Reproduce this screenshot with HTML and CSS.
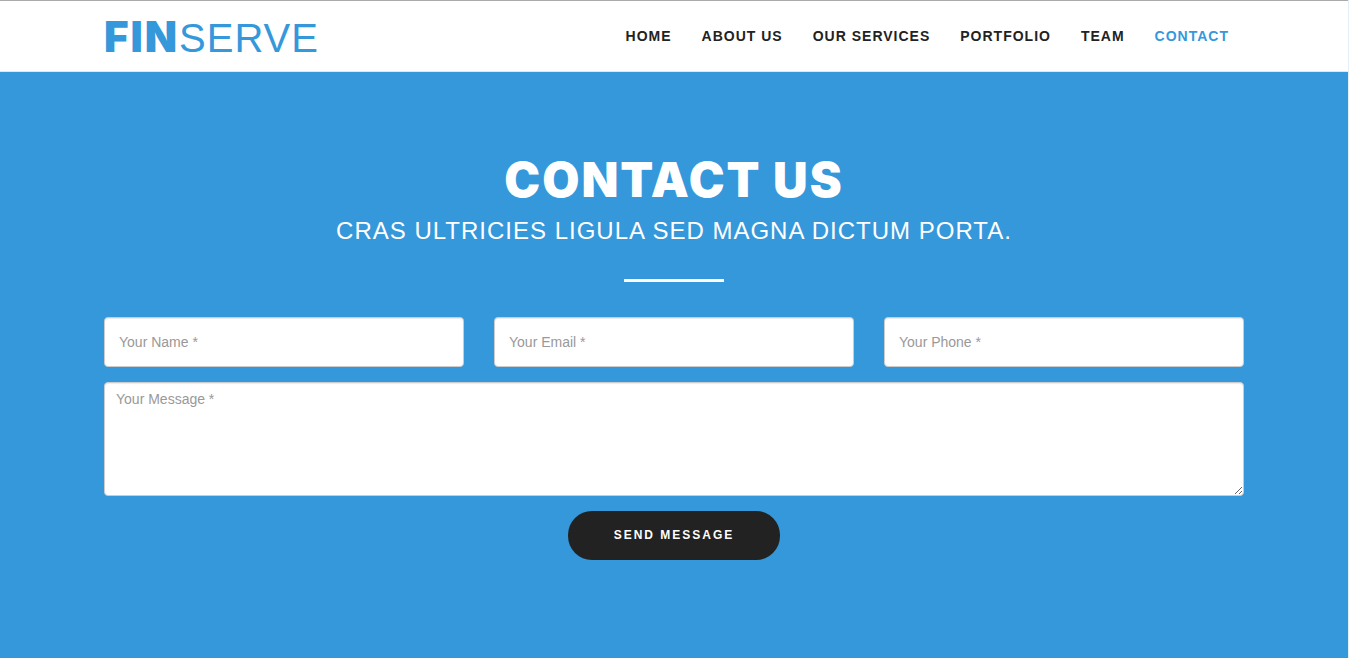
FILE: index.html
```html
<!DOCTYPE html>
<html lang="en">
<head>
<meta charset="utf-8">
<meta name="viewport" content="width=device-width, initial-scale=1">
<title>Finserve - Contact</title>
<link rel="stylesheet" href="styles.css">
</head>
<body class="page">
<header class="header">
  <div class="container header-row">
    <a class="logo" href="#"><span class="logo-strong">FIN</span>SERVE</a>
    <nav class="nav">
      <a class="nav-link" href="#home">HOME</a>
      <a class="nav-link" href="#about">ABOUT US</a>
      <a class="nav-link" href="#services">OUR SERVICES</a>
      <a class="nav-link" href="#portfolio">PORTFOLIO</a>
      <a class="nav-link" href="#team">TEAM</a>
      <a class="nav-link nav-link-active" href="#contact" aria-current="page">CONTACT</a>
    </nav>
  </div>
</header>
<main class="contact" id="contact">
  <div class="container">
    <h1 class="title">CONTACT US</h1>
    <p class="subtitle">CRAS ULTRICIES LIGULA SED MAGNA DICTUM PORTA.</p>
    <hr class="divider">
    <form class="form">
      <div class="fields">
        <input class="field" type="text" aria-label="Your Name" placeholder="Your Name *">
        <input class="field" type="email" aria-label="Your Email" placeholder="Your Email *">
        <input class="field" type="tel" aria-label="Your Phone" placeholder="Your Phone *">
      </div>
      <textarea class="field message" aria-label="Your Message" placeholder="Your Message *"></textarea>
      <button class="send" type="submit">SEND MESSAGE</button>
    </form>
  </div>
</main>
</body>
</html>
```
FILE: styles.css
```css
* {
  box-sizing: border-box;
}

.page {
  margin: 0;
  min-height: 100vh;
  display: flex;
  flex-direction: column;
  border-right: 1px solid #e4eef6;
  font-family: "Liberation Sans", Arial, sans-serif;
  font-size: 14px;
  color: #222;
  background: #fff;
}

.container {
  width: 100%;
  max-width: 1170px;
  margin: 0 auto;
  padding: 0 15px;
}

.header {
  border-top: 1px solid #aaa;
  border-bottom: 1px solid #e0e8ee;
  background: #fff;
}

.header-row {
  display: flex;
  align-items: center;
  justify-content: space-between;
  min-height: 70px;
}

.logo {
  display: flex;
  align-items: baseline;
  font-size: 40px;
  line-height: 48px;
  letter-spacing: 1px;
  color: #3598db;
  text-decoration: none;
  padding-top: 2px;
}

.logo-strong {
  font-family: Inter, "Arial Black", sans-serif;
  font-size: 42px;
  font-weight: 900;
  letter-spacing: 2px;
}

.nav {
  display: flex;
}

.nav-link {
  padding: 0 15px;
  line-height: 20px;
  font-weight: 700;
  letter-spacing: 1px;
  color: #222;
  text-decoration: none;
}

.nav-link-active {
  color: #3598db;
}

.contact {
  flex: 1;
  padding: 80px 0;
  background: #3598db;
  color: #fff;
  text-align: center;
}

.title {
  margin: 0;
  font-family: Inter, "Arial Black", sans-serif;
  font-size: 48px;
  font-weight: 900;
  line-height: 56px;
  letter-spacing: 2px;
}

.subtitle {
  margin: 8px 0 0;
  font-size: 24px;
  line-height: 30px;
  letter-spacing: 1px;
}

.divider {
  width: 100px;
  height: 3px;
  margin: 33px auto 35px;
  border: 0;
  background: #fff;
}

.form {
  display: flex;
  flex-direction: column;
  align-items: center;
  gap: 15px;
}

.fields {
  width: 100%;
  display: grid;
  grid-template-columns: repeat(3, 1fr);
  gap: 30px;
}

.field {
  width: 100%;
  min-width: 0;
  height: 50px;
  padding: 6px 14px;
  border: 1px solid #ccc;
  border-radius: 4px;
  background: #fff;
  box-shadow: inset 0 1px 1px rgba(0, 0, 0, 0.08);
  font-family: inherit;
  font-size: 14px;
  line-height: 20px;
  color: #555;
}

.field::placeholder {
  color: #999;
  opacity: 1;
}

.message {
  display: block;
  height: 114px;
  padding: 6px 11px;
  resize: vertical;
}

.send {
  padding: 16px 46px;
  border: 0;
  border-radius: 24px;
  background: #222;
  color: #fff;
  font-family: inherit;
  font-size: 12px;
  font-weight: 700;
  line-height: 17px;
  letter-spacing: 2px;
}
```
